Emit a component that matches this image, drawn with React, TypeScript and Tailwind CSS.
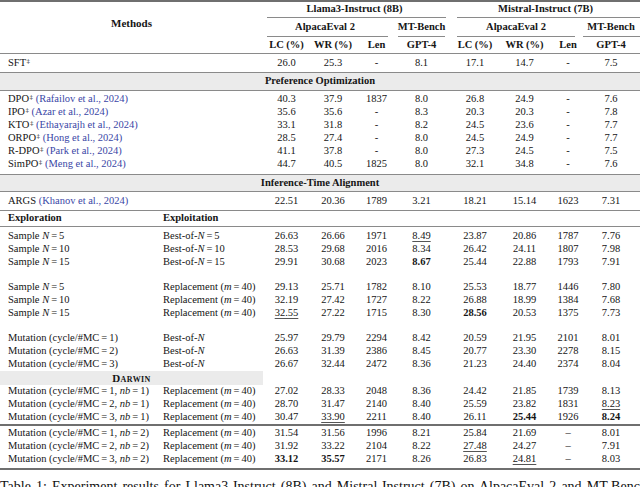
import React from "react";

const ROW =
  "grid grid-cols-[160px_103px_47px_46px_41px_49px_58px_41px_46px_40px_9px] items-center";
const SUB =
  "grid grid-cols-[47px_46px_41px_49px_58px_41px_46px_40px_9px] items-center";

function Val({ v }: { v: string }) {
  if (v.startsWith("b:")) return <span className="font-bold">{v.slice(2)}</span>;
  if (v.startsWith("u:"))
    return (
      <span className="underline decoration-[0.8px] underline-offset-[2px] decoration-[#555]">
        {v.slice(2)}
      </span>
    );
  return <span>{v}</span>;
}

function Cells({ vals }: { vals: string[] }) {
  return (
    <>
      {vals.map((v, i) => (
        <div key={i} className="text-center">
          <Val v={v} />
        </div>
      ))}
      <div />
    </>
  );
}

const Cite = ({ children }: { children: React.ReactNode }) => (
  <span className="text-[#3a46a6]">{children}</span>
);

const Dag = () => <span className="text-[7px] relative -top-[3px] pl-[0.5px]">‡</span>;

const I = ({ children }: { children: React.ReactNode }) => (
  <span className="italic">{children}</span>
);

const Eq = () => <span className="px-[2px]">=</span>;

function Rule({ thick }: { thick?: boolean }) {
  return thick ? <div className="h-[2px] bg-[#6f6f6f]" /> : <div className="h-px bg-[#8a8a8a]" />;
}

function Section({ title }: { title: string }) {
  return (
    <div className="h-[17px] bg-[#ebebeb] flex items-center justify-center font-bold">
      {title}
    </div>
  );
}

const po: [React.ReactNode, string[]][] = [
  [<>DPO<Dag /> <Cite>(Rafailov et al., 2024)</Cite></>, ["40.3", "37.9", "1837", "8.0", "26.8", "24.9", "-", "7.6"]],
  [<>IPO<Dag /> <Cite>(Azar et al., 2024)</Cite></>, ["35.6", "35.6", "-", "8.3", "20.3", "20.3", "-", "7.8"]],
  [<>KTO<Dag /> <Cite>(Ethayarajh et al., 2024)</Cite></>, ["33.1", "31.8", "-", "8.2", "24.5", "23.6", "-", "7.7"]],
  [<>ORPO<Dag /> <Cite>(Hong et al., 2024)</Cite></>, ["28.5", "27.4", "-", "8.0", "24.5", "24.9", "-", "7.7"]],
  [<>R-DPO<Dag /> <Cite>(Park et al., 2024)</Cite></>, ["41.1", "37.8", "-", "8.0", "27.3", "24.5", "-", "7.5"]],
  [<>SimPO<Dag /> <Cite>(Meng et al., 2024)</Cite></>, ["44.7", "40.5", "1825", "8.0", "32.1", "34.8", "-", "7.6"]],
];

const sample = (n: string) => <>Sample <I>N</I><Eq />{n}</>;
const bestN = (n: string) => <>Best-of-<I>N</I><Eq />{n}</>;
const repl = <>Replacement (<I>m</I><Eq />40)</>;
const mut = (c: string) => <>Mutation (cycle/#MC<Eq />{c})</>;
const mutnb = (c: string, nb: string) => (
  <>Mutation (cycle/#MC<Eq />{c}, <I>nb</I><Eq />{nb})</>
);

type R = [React.ReactNode, React.ReactNode, string[]];

const blockA: R[] = [
  [sample("5"), bestN("5"), ["26.63", "26.66", "1971", "u:8.49", "23.87", "20.86", "1787", "7.76"]],
  [sample("10"), bestN("10"), ["28.53", "29.68", "2016", "8.34", "26.42", "24.11", "1807", "7.98"]],
  [sample("15"), bestN("15"), ["29.91", "30.68", "2023", "b:8.67", "25.44", "22.88", "1793", "7.91"]],
];
const blockB: R[] = [
  [sample("5"), repl, ["29.13", "25.71", "1782", "8.10", "25.53", "18.77", "1446", "7.80"]],
  [sample("10"), repl, ["32.19", "27.42", "1727", "8.22", "26.88", "18.99", "1384", "7.68"]],
  [sample("15"), repl, ["u:32.55", "27.22", "1715", "8.30", "b:28.56", "20.53", "1375", "7.73"]],
];
const blockC: R[] = [
  [mut("1"), <>Best-of-<I>N</I></>, ["25.97", "29.79", "2294", "8.42", "20.59", "21.95", "2101", "8.01"]],
  [mut("2"), <>Best-of-<I>N</I></>, ["26.63", "31.39", "2386", "8.45", "20.77", "23.30", "2278", "8.15"]],
  [mut("3"), <>Best-of-<I>N</I></>, ["26.67", "32.44", "2472", "8.36", "21.23", "24.40", "2374", "8.04"]],
];
const blockD: R[] = [
  [mutnb("1", "1"), repl, ["27.02", "28.33", "2048", "8.36", "24.42", "21.85", "1739", "8.13"]],
  [mutnb("2", "1"), repl, ["28.70", "31.47", "2140", "8.40", "25.59", "23.82", "1831", "u:8.23"]],
  [mutnb("3", "1"), repl, ["30.47", "u:33.90", "2211", "8.40", "26.11", "b:25.44", "1926", "b:8.24"]],
];
const blockE: R[] = [
  [mutnb("1", "2"), repl, ["31.54", "31.56", "1996", "8.21", "25.84", "21.69", "–", "8.01"]],
  [mutnb("2", "2"), repl, ["31.92", "33.22", "2104", "8.22", "u:27.48", "24.27", "–", "7.91"]],
  [mutnb("3", "2"), repl, ["b:33.12", "b:35.57", "2171", "8.26", "26.83", "u:24.81", "–", "8.03"]],
];

function Block({ rows }: { rows: R[] }) {
  return (
    <>
      {rows.map((r, i) => (
        <div key={i} className={`${ROW} h-[13px] whitespace-nowrap`}>
          <div className="pl-[8px]">{r[0]}</div>
          <div className="pl-[3px]">{r[1]}</div>
          <Cells vals={r[2]} />
        </div>
      ))}
    </>
  );
}

export default function App() {
  return (
    <div
      className="w-[640px] h-[487px] overflow-hidden bg-white text-[#151515] text-[10.5px] leading-none"
      style={{ fontFamily: '"Liberation Serif", "Times New Roman", serif' }}
    >
      <Rule thick />
      {/* header */}
      <div className="grid grid-cols-[263px_377px] h-[51px]">
        <div className="flex items-center justify-center font-bold pb-[9px] text-[11px]">Methods</div>
        <div className="flex flex-col font-bold whitespace-nowrap">
          <div className="h-[15px] flex items-center">
            <div className="w-[183px] text-center">Llama3-Instruct (8B)</div>
            <div className="w-[194px] text-center pl-[5px]">Mistral-Instruct (7B)</div>
          </div>
          <div className="h-px flex">
            <div className="ml-[4px] w-[179px] bg-[#8a8a8a]" />
            <div className="ml-[11px] flex-1 bg-[#8a8a8a]" />
          </div>
          <div className="h-[18px] flex items-center">
            <div className="w-[134px] text-center pr-[10px]">AlpacaEval 2</div>
            <div className="w-[49px] flex justify-center">MT-Bench</div>
            <div className="w-[145px] text-center pr-[5px]">AlpacaEval 2</div>
            <div className="w-[40px] flex justify-center">MT-Bench</div>
          </div>
          <div className="h-px flex">
            <div className="ml-[4px] w-[121px] bg-[#8a8a8a]" />
            <div className="ml-[10px] w-[47px] bg-[#8a8a8a]" />
            <div className="ml-[12px] w-[118px] bg-[#8a8a8a]" />
            <div className="ml-[8px] flex-1 bg-[#8a8a8a]" />
          </div>
          <div className={`${SUB} h-[16px]`}>
            <div className="text-center">LC (%)</div>
            <div className="text-center">WR (%)</div>
            <div className="text-center">Len</div>
            <div className="text-center">GPT-4</div>
            <div className="text-center">LC (%)</div>
            <div className="text-center">WR (%)</div>
            <div className="text-center">Len</div>
            <div className="text-center">GPT-4</div>
            <div />
          </div>
        </div>
      </div>
      <Rule />
      <div className={`${ROW} h-[18px]`}>
        <div className="pl-[8px] col-span-2">SFT<Dag /></div>
        <Cells vals={["26.0", "25.3", "-", "8.1", "17.1", "14.7", "-", "7.5"]} />
      </div>
      <Rule />
      <Section title="Preference Optimization" />
      <Rule />
      <div className="pt-[2px] pb-[3px]">
        {po.map((r, i) => (
          <div key={i} className={`${ROW} h-[13px] whitespace-nowrap`}>
            <div className="pl-[8px] col-span-2">{r[0]}</div>
            <Cells vals={r[1]} />
          </div>
        ))}
      </div>
      <Rule />
      <div className="h-[16px] bg-[#ebebeb] flex items-center justify-center font-bold">
        Inference-Time Alignment
      </div>
      <Rule />
      <div className={`${ROW} h-[18px] whitespace-nowrap`}>
        <div className="pl-[8px] col-span-2">
          ARGS <Cite>(Khanov et al., 2024)</Cite>
        </div>
        <Cells vals={["22.51", "20.36", "1789", "3.21", "18.21", "15.14", "1623", "7.31"]} />
      </div>
      <Rule />
      <div className={`${ROW} h-[15px] font-bold`}>
        <div className="pl-[8px]">Exploration</div>
        <div className="pl-[3px]">Exploitation</div>
      </div>
      <Rule />
      <div className="pt-[3px]">
        <Block rows={blockA} />
        <div className="h-[12px]" />
        <Block rows={blockB} />
        <div className="h-[12px]" />
        <Block rows={blockC} />
        <div className="h-[14px] w-[263px] bg-[#ebebeb] flex items-center justify-center font-bold text-[11px] [font-variant-caps:small-caps] tracking-[0.4px]">
          Darwin
        </div>
        <Block rows={blockD} />
      </div>
      <Rule thick />
      <div className="pt-[1px] pb-[2px]">
        <Block rows={blockE} />
      </div>
      <Rule thick />
      <div className="mt-[9px] h-[16px] text-[14px] leading-[16px] whitespace-nowrap text-[#111] [word-spacing:1.6px]">
        Table 1: Experiment results for Llama3-Instruct (8B) and Mistral-Instruct (7B) on AlpacaEval 2 and MT-Bench
      </div>
    </div>
  );
}
